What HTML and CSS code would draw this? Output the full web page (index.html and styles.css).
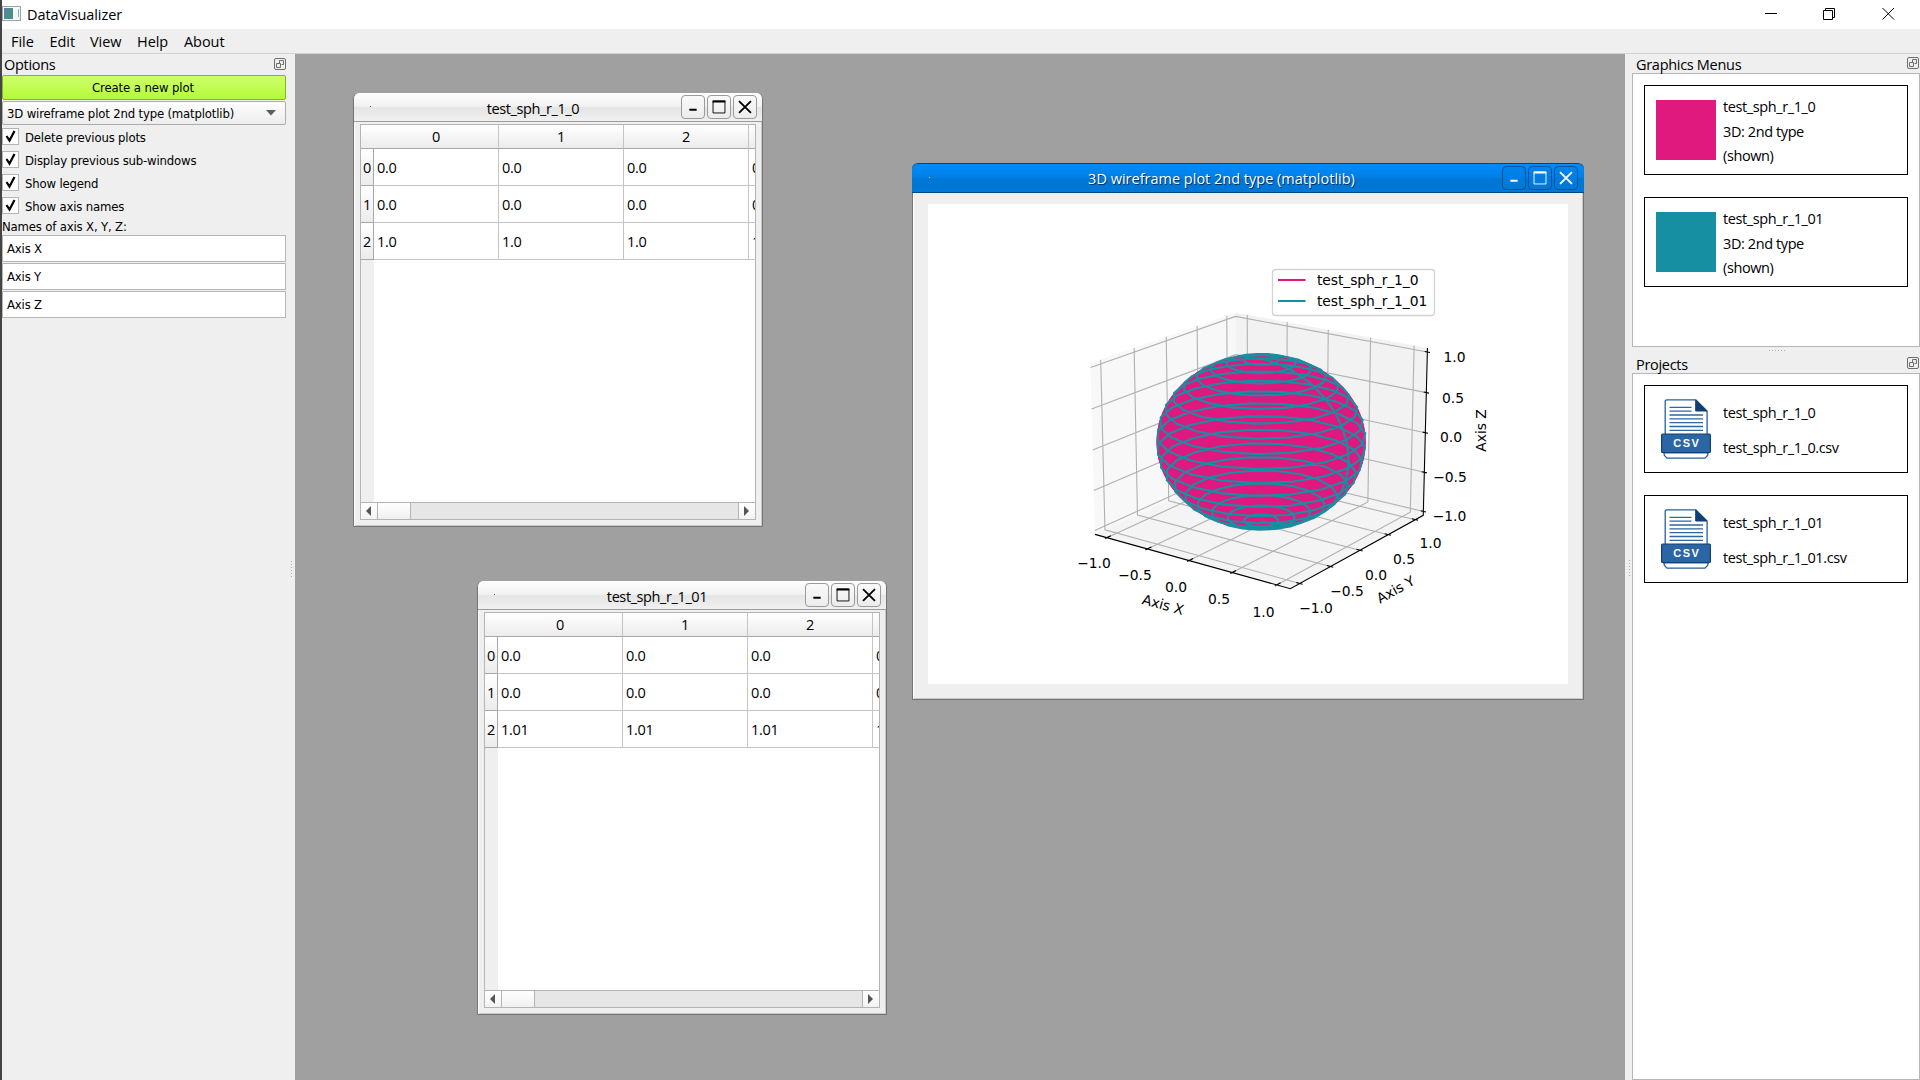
FILE: index.html
```html
<!DOCTYPE html>
<html lang="en">
<head>
<meta charset="utf-8">
<title>DataVisualizer</title>
<link rel="stylesheet" href="styles.css">
</head>
<body>
<svg class="defs" width="0" height="0">
  <symbol id="float" viewBox="0 0 12 12"><rect x=".5" y=".5" width="11" height="11" rx="1.5" fill="none" stroke="#6e6e6e"/><path d="M5.5 5V2.5h4v4H7.5M2.5 5.500h4v4h-4z" fill="none" stroke="#6e6e6e"/></symbol>
  <symbol id="min" viewBox="0 0 24 24"><path d="M8 15h8" stroke="currentColor" stroke-width="2"/></symbol>
  <symbol id="max" viewBox="0 0 24 24"><path d="M5.5 5.5h13v13h-13z" fill="none" stroke="currentColor"/><path d="M5 6h14" stroke="currentColor" stroke-width="2"/></symbol>
  <symbol id="close" viewBox="0 0 24 24"><path d="M5.5 5.5l13 13M18.500 5.500l-13 13" stroke="currentColor" stroke-width="2"/></symbol>
  <symbol id="csv" viewBox="0 0 50 61">
    <path d="M4.200 36V2.500q0-1.700 1.700-1.700h29l11.200 11.200v24" fill="#fff" stroke="#2a5f9a" stroke-width="1.300"/>
    <path d="M34.700 1v11h11.300z" fill="#0f3f74" stroke="#0f3f74"/>
    <path d="M8.500 8.300h22M8.500 12.200h22M8.500 16h33.500M8.500 19.800h33.500M8.500 23.700h33.500M8.500 27.500h33.500M8.500 31.300h33.500" stroke="#2f669f" stroke-width="1.300"/>
    <path d="M1 53l3 3h42l3-3z" fill="#0f3f74"/>
    <path d="M3.200 54v2.200l2.800 3h38l2.800-3V54z" fill="#fff" stroke="#2a5f9a" stroke-width="1.200"/>
    <rect x=".6" y="35.200" width="48.800" height="18.300" rx="1" fill="#2a66a3" stroke="#0f4278" stroke-width="1.200"/>
  </symbol>
</svg>
<div class="app">
  <header class="titlebar">
    <svg class="appicon" width="19" height="15"><rect x=".5" y=".5" width="18" height="14" fill="#f4f8fa" stroke="#98a2a8"/><rect x="2" y="2" width="9" height="11" fill="#4a8f86"/><rect x="2" y="2" width="4" height="6" fill="#5585a5"/><rect x="16" y="3" width="1" height="8" fill="#7bbcae"/></svg>
    <span class="apptitle">DataVisualizer</span>
    <svg class="syscontrols" width="132" height="14"><path d="M0 6.500h12M58.500 3.500h9v9h-9zM60.500 3V1.500h9v9H68M117.500 1l11.500 11.500M129 1l-11.500 11.500" fill="none" stroke="#000"/></svg>
  </header>
  <nav class="menubar"><span class="m1">File</span><span class="m2">Edit</span><span class="m3">View</span><span class="m4">Help</span><span>About</span></nav>
  <main class="workspace">
    <aside class="options">
      <div class="dockhead"><span>Options</span><svg width="12" height="12"><use href="#float"/></svg></div>
      <button class="create">Create a new plot</button>
      <div class="combo"><span>3D wireframe plot 2nd type (matplotlib)</span><svg width="10" height="6"><path d="M0 0h10L5 5.500z" fill="#5c5c5c"/></svg></div>
      <div class="checks">
        <div class="check"><i><svg width="15" height="15"><path d="M3.500 7l3 4.500L11.500 2" /></svg></i><span>Delete previous plots</span></div>
        <div class="check"><i><svg width="15" height="15"><path d="M3.500 7l3 4.500L11.500 2" /></svg></i><span>Display previous sub-windows</span></div>
        <div class="check"><i><svg width="15" height="15"><path d="M3.500 7l3 4.500L11.500 2" /></svg></i><span>Show legend</span></div>
        <div class="check"><i><svg width="15" height="15"><path d="M3.500 7l3 4.500L11.500 2" /></svg></i><span>Show axis names</span></div>
      </div>
      <div class="names">Names of axis X, Y, Z:</div>
      <div class="fields"><div class="field">Axis X</div><div class="field">Axis Y</div><div class="field">Axis Z</div></div>
      <div class="grip grip-left"></div>
    </aside>

    <section class="mdi">
      <div class="win win-a">
        <div class="wintitle"><b class="dot"></b><span>test_sph_r_1_0</span><svg><use href="#min"/></svg><svg><use href="#max"/></svg><svg><use href="#close"/></svg></div>
        <div class="table">
          <div class="row head"><i></i><span>0</span><span>1</span><span>2</span><span></span></div>
          <div class="row"><i>0</i><span>0.0</span><span>0.0</span><span>0.0</span><span>0.0</span></div>
          <div class="row"><i>1</i><span>0.0</span><span>0.0</span><span>0.0</span><span>0.0</span></div>
          <div class="row"><i>2</i><span>1.0</span><span>1.0</span><span>1.0</span><span>1.0</span></div>
          <div class="blank"></div>
          <div class="scroll"><div class="arrow"><svg width="5" height="10"><path d="M5 0v10L0 5z"/></svg></div><div class="handle"></div><div class="track"></div><div class="arrow"><svg width="5" height="10"><path d="M0 0v10l5-5z"/></svg></div></div>
        </div>
      </div>
      <div class="win win-b">
        <div class="wintitle"><b class="dot"></b><span>test_sph_r_1_01</span><svg><use href="#min"/></svg><svg><use href="#max"/></svg><svg><use href="#close"/></svg></div>
        <div class="table">
          <div class="row head"><i></i><span>0</span><span>1</span><span>2</span><span></span></div>
          <div class="row"><i>0</i><span>0.0</span><span>0.0</span><span>0.0</span><span>0.0</span></div>
          <div class="row"><i>1</i><span>0.0</span><span>0.0</span><span>0.0</span><span>0.0</span></div>
          <div class="row"><i>2</i><span>1.01</span><span>1.01</span><span>1.01</span><span>1.01</span></div>
          <div class="blank"></div>
          <div class="scroll"><div class="arrow"><svg width="5" height="10"><path d="M5 0v10L0 5z"/></svg></div><div class="handle"></div><div class="track"></div><div class="arrow"><svg width="5" height="10"><path d="M0 0v10l5-5z"/></svg></div></div>
        </div>
      </div>
      <div class="win win-plot">
        <div class="wintitle active"><b class="dot"></b><span>3D wireframe plot 2nd type (matplotlib)</span><svg><use href="#min"/></svg><svg><use href="#max"/></svg><svg><use href="#close"/></svg></div>
        <svg class="plot" id="plot" width="640" height="480" viewBox="0 0 640 480"></svg>
      </div>
    </section>

    <aside class="docks">
      <div class="dockhead"><span>Graphics Menus</span><svg width="12" height="12"><use href="#float"/></svg></div>
      <div class="list graphics">
        <div class="card gcard"><div class="swatch pink"></div><div class="lines"><p>test_sph_r_1_0</p><p>3D: 2nd type</p><p>(shown)</p></div></div>
        <div class="card gcard"><div class="swatch teal"></div><div class="lines"><p>test_sph_r_1_01</p><p>3D: 2nd type</p><p>(shown)</p></div></div>
      </div>
      <div class="grip grip-mid"></div>
      <div class="dockhead"><span>Projects</span><svg width="12" height="12"><use href="#float"/></svg></div>
      <div class="list projects">
        <div class="card pcard"><svg width="50" height="61"><use href="#csv"/><text x="12.300" y="47.800" textLength="25.500" class="csv-text">CSV</text></svg><div class="lines"><p>test_sph_r_1_0</p><p>test_sph_r_1_0.csv</p></div></div>
        <div class="card pcard"><svg width="50" height="61"><use href="#csv"/><text x="12.300" y="47.800" textLength="25.500" class="csv-text">CSV</text></svg><div class="lines"><p>test_sph_r_1_01</p><p>test_sph_r_1_01.csv</p></div></div>
      </div>
      <div class="grip grip-right"></div>
    </aside>
  </main>
</div>
<script src="plot.js"></script>
</body>
</html>
```
FILE: styles.css
```css
* { box-sizing: border-box; }
body { margin: 0; background: #efefef; color: #000; font: 14.5px/20px "Open Sans", "Noto Sans", sans-serif; letter-spacing: -.4px; overflow: hidden; }
p { margin: 0; }
.defs { position: absolute; }
.app { display: flex; flex-direction: column; width: 1920px; height: 1080px; border-left: 2px solid #444; }
.titlebar { display: flex; align-items: center; height: 29px; background: #fff; padding-right: 23px; }
.appicon { margin-right: 6px; margin-top: -2px; }
.apptitle { letter-spacing: -.08px; }
.syscontrols { margin-left: auto; margin-top: -1px; }
.menubar { display: flex; height: 25px; padding: 3px 0 0 9px; border-bottom: 1px solid #d2d2d2; letter-spacing: -.05px; }
.m1 { width: 38.5px; }
.m2 { width: 40.5px; }
.m3 { width: 47px; }
.m4 { width: 47px; }
.workspace { display: flex; flex: 1; min-height: 0; }

.options { position: relative; display: flex; flex-direction: column; width: 293px; padding-right: 9px; font: 13px/16px "DejaVu Sans Condensed", "DejaVu Sans", sans-serif; font-stretch: condensed; letter-spacing: -.17px; }
.dockhead { display: flex; justify-content: space-between; align-items: center; flex: none; height: 19px; font: 14.5px/19px "Open Sans", sans-serif; letter-spacing: -.3px; }
.dockhead span { position: relative; top: 1px; }
.dockhead svg { margin-top: -1px; }
.options .dockhead { height: 21px; padding-left: 2px; align-items: flex-start; line-height: 20px; }
.options .dockhead svg { margin-top: 4px; }
.create { height: 25px; padding: 1px 2px 0 0; border: 1px solid #84b52e; border-radius: 2px; background: linear-gradient(#cdff6c, #b5fa38); font: inherit; letter-spacing: -.1px; color: #000; }
.combo { display: flex; align-items: center; justify-content: space-between; height: 24px; margin-top: 1px; padding: 1px 9px 0 4px; border: 1px solid #adadad; border-radius: 2px; background: linear-gradient(#fdfdfd, #ededed); }
.combo svg { margin-top: -2px; }
.checks { display: grid; gap: 6px; padding-top: 3px; }
.check { display: flex; align-items: center; height: 17px; gap: 6px; }
.check span { padding-top: 2px; }
.check i { width: 17px; height: 17px; border: 1px solid #b4b4b4; background: #fff; }
.check svg { display: block; }
.check path { fill: none; stroke: #000; stroke-width: 2.2; }
.names { height: 21px; padding-top: 5px; }
.fields { display: grid; gap: 1px; }
.field { height: 27px; padding: 5px 4px; border: 1px solid #b6b6b6; background: #fff; }

.grip { position: absolute; }
.grip-left, .grip-right { width: 1px; height: 17px; background: repeating-linear-gradient(#b0b0b0 0 1px, transparent 1px 3px); }
.grip-left { right: 3px; top: 507px; }
.grip-right { left: 4px; top: 506px; }
.grip-mid { left: 144px; top: 296px; width: 17px; height: 1px; background: repeating-linear-gradient(90deg, #b0b0b0 0 1px, transparent 1px 3px); }

.mdi { position: relative; flex: none; width: 1330px; background: #a0a0a0; overflow: hidden; }
.win { position: absolute; width: 410px; height: 434px; border: 1px solid #747474; border-top: 0; border-radius: 6px 6px 0 0; background: #efefef; box-shadow: inset 1px 0 #fff, inset -1px -1px #c8c8c8; }
.win-a { left: 58px; top: 39px; }
.win-b { left: 182px; top: 527px; }
.win-plot { left: 617px; top: 109px; width: 672px; height: 537px; }
.wintitle { display: flex; align-items: center; gap: 2px; height: 29px; padding: 0 5px 1px 0; border-bottom: 1px solid #9b9b9b; border-radius: 6px 6px 0 0; background: linear-gradient(#fff 0, #f1f1f1 48%, #e5e5e5 52%, #f0f0f0 100%); letter-spacing: -.4px; }
.wintitle span { flex: 1; text-align: center; padding: 4px 0 0 1px; }
.wintitle svg { flex: none; width: 24px; height: 24px; border: 1px solid #9a9a9a; border-radius: 4px; background: linear-gradient(#fafafa, #ececec); }
.dot { align-self: center; width: 1px; height: 1px; margin: 0 13px 0 16px; background: #2b7a60; }
.wintitle.active { height: 30px; margin: 0 -1px; padding: 0 6px 1px 1px; border: solid #00457c; border-width: 1px 0 1px; background: linear-gradient(#008cfa 0, #0080e8 45%, #0076d4 55%, #0078d7 100%); color: #fff; letter-spacing: 0; text-shadow: 1px 1px #003058; }
.wintitle.active span { padding: 3px 2px 0 0; }
.wintitle.active svg { border-color: #00529a; background: linear-gradient(#0083ee, #0077d5); }
.wintitle.active .dot { background: #b8e04a; }
.table { display: flex; flex-direction: column; width: 396px; height: 396px; margin: 2px 0 0 6px; border: 1px solid #b4b4b4; background: #fff; overflow: hidden; letter-spacing: -.3px; }
.row { display: grid; grid-template-columns: 13px 125px 125px 125px 6px; flex: none; height: 37px; overflow: hidden; }
.row span { padding: 9px 0 0 3px; border-right: 1px solid #c4c4c4; border-bottom: 1px solid #c4c4c4; overflow: hidden; }
.row span:last-child { border-right: 0; }
.row i { padding: 9px 0 0 2px; border-right: 1px solid #a8a8a8; border-bottom: 1px solid #a8a8a8; background: linear-gradient(#fff, #ececec); font-style: normal; }
.row.head { height: 24px; background: linear-gradient(#fff, #ebebeb); }
.row.head span { padding: 2px 0 0; text-align: center; border-bottom-color: #a8a8a8; }
.row.head i { border-right: 0; background: none; }
.blank { flex: 1; width: 13px; background: #efefef; }
.scroll { display: flex; flex: none; height: 17px; border-top: 1px solid #b4b4b4; background: #e6e6e6; }
.arrow { display: flex; align-items: center; justify-content: center; width: 16px; padding-right: 1px; background: linear-gradient(#fff, #f3f3f3); }
.arrow path { fill: #555; }
.handle { width: 34px; border: solid #b4b4b4; border-width: 0 1px; background: linear-gradient(#fff, #f0f0f0); }
.track { flex: 1; border-right: 1px solid #b4b4b4; }
.plot { display: block; margin: 11px 0 0 15px; background: #fff; }
.plot text { font: 13.89px "DejaVu Sans", sans-serif; letter-spacing: -.08px; }

.docks { position: relative; display: flex; flex-direction: column; width: 295px; flex: none; padding-left: 7px; }
.docks .dockhead { padding: 0 1px 0 4px; }
.list { border: 1px solid #b6b6b6; background: #fff; }
.graphics { display: grid; gap: 22px; align-content: start; height: 274px; padding: 11px; }
.card { display: flex; border: 1px solid #000; background: #fff; }
.gcard { height: 90px; padding: 14px 11px; gap: 7px; }
.swatch { width: 60px; height: 60px; }
.pink { background: #e0197f; }
.teal { background: #178fa3; }
.gcard p { height: 24.500px; line-height: 24px; }
.gcard .lines { margin-top: -5px; }
.docks .graphics + .grip + .dockhead { margin-top: 7px; }
.projects { display: grid; gap: 22px; align-content: start; flex: 1; padding: 11px; }
.pcard { height: 88px; padding: 13px 0 0 16px; gap: 12px; }
.pcard p { height: 35px; line-height: 20px; }
.pcard .lines { padding-top: 4px; }
.csv-text { font: bold 11px "Liberation Sans", sans-serif; fill: #fff; letter-spacing: 0; }
```
FILE: plot.js
```js
const PINK = '#e0197f', TEAL = '#178fa3';
const L = 1.15, LZ = 1.05;
const P = [84.12055, 60.49317, -0.05099, 1.04081, 19.17529, -26.66858, -80.57649, 1.23318, -0.03006, 0.04067, -0.01254];

// Perspective projection of a data point onto the figure canvas.
function project([x, y, z]) {
  const w = P[8] * x + P[9] * y + P[10] * z + 1;
  return [((P[0] * x + P[1] * y + P[2] * z + P[3]) / w + 332).toFixed(2),
          ((P[4] * x + P[5] * y + P[6] * z + P[7]) / w + 236).toFixed(2)];
}
const path = (pts, close) => 'M' + pts.map(p => project(p).join(' ')).join('L') + (close ? 'Z' : '');
const line = (d, stroke, width, extra = '') => `<path d="${d}" fill="none" stroke="${stroke}" stroke-width="${width}" ${extra}/>`;
let out = '';

// Panes
const pane = (pts, fill) => { out += `<path d="${path(pts, true)}" fill="${fill}"/>`; };
pane([[-L, -L, -LZ], [-L, L, -LZ], [-L, L, LZ], [-L, -L, LZ]], '#f8f8f8');
pane([[-L, L, -LZ], [L, L, -LZ], [L, L, LZ], [-L, L, LZ]], '#f2f2f2');
pane([[-L, -L, -LZ], [L, -L, -LZ], [L, L, -LZ], [-L, L, -LZ]], '#f4f4f4');

// Grid
const ticks = [-1, -.5, 0, .5, 1];
let grid = '';
for (const t of ticks) {
  grid += path([[t, -L, -LZ], [t, L, -LZ], [t, L, LZ]]);
  grid += path([[L, t, -LZ], [-L, t, -LZ], [-L, t, LZ]]);
  grid += path([[-L, -L, t], [-L, L, t], [L, L, t]]);
}
out += line(grid, '#b0b0b0', 1.1);

// Axis lines and tick marks
let axes = path([[-L, -L, -LZ], [L, -L, -LZ], [L, L, -LZ], [L, L, LZ]]);
for (const t of ticks) {
  axes += path([[t, -L - .03, -LZ], [t, -L + .06, -LZ]]);
  axes += path([[L + .03, t, -LZ], [L - .04, t, -LZ]]);
  axes += path([[L + .03, L, t], [L - .03, L, t]]);
}
out += line(axes, '#000', 1.1);

// Spheres
const on = (r, th, ph) => [r * Math.sin(th) * Math.cos(ph), r * Math.sin(th) * Math.sin(ph), r * Math.cos(th)];
function rings(r, nTheta, nPhi) {
  const list = [];
  for (let i = 0; i <= nTheta; i++) {
    const pts = [];
    for (let j = 0; j < nPhi; j++) pts.push(on(r, Math.PI * i / nTheta, 2 * Math.PI * j / nPhi));
    list.push(path(pts, true));
  }
  return list;
}
for (const d of rings(1, 100, 60)) out += `<path d="${d}" fill="${PINK}" stroke="${PINK}" stroke-width="2"/>`;
const seam = [];
for (let i = 0; i <= 19; i++) seam.push(on(1.01, Math.PI * i / 19, 0));
out += line(rings(1.01, 19, 19).join('') + path(seam), TEAL, 2.08, 'stroke-linejoin="round"');

// Labels
const text = (x, y, s, rot = 0) => { out += `<text x="${x}" y="${y + 5}" text-anchor="middle" transform="rotate(${rot} ${x} ${y})">${s}</text>`; };
const names = ['−1.0', '−0.5', '0.0', '0.5', '1.0'];
[[166, 359], [207, 371], [248, 383], [291, 395], [335.5, 407.5]].forEach(([x, y], i) => text(x, y, names[i]));
[[388, 404], [419, 387], [448, 371], [476, 355], [502.5, 339]].forEach(([x, y], i) => text(x, y, names[i]));
[[521.5, 312], [522, 273], [523, 233], [525, 194], [526.5, 153]].forEach(([x, y], i) => text(x, y, names[i]));
text(235, 400.5, 'Axis X', 15.5);
text(467.5, 385.5, 'Axis Y', -29);
text(552.5, 226.5, 'Axis Z', -90);

// Legend
out += '<rect x="344.500" y="65.500" width="162" height="46" rx="3" fill="#fff" fill-opacity=".8" stroke="#d3d3d3" stroke-width="1.300"/>';
[['test_sph_r_1_0', PINK, 76], ['test_sph_r_1_01', TEAL, 97]].forEach(([s, c, y]) => {
  out += line(`M350 ${y}h27.500`, c, 2.08) + `<text x="389" y="${y + 5}">${s}</text>`;
});
document.getElementById('plot').innerHTML = out;
```
